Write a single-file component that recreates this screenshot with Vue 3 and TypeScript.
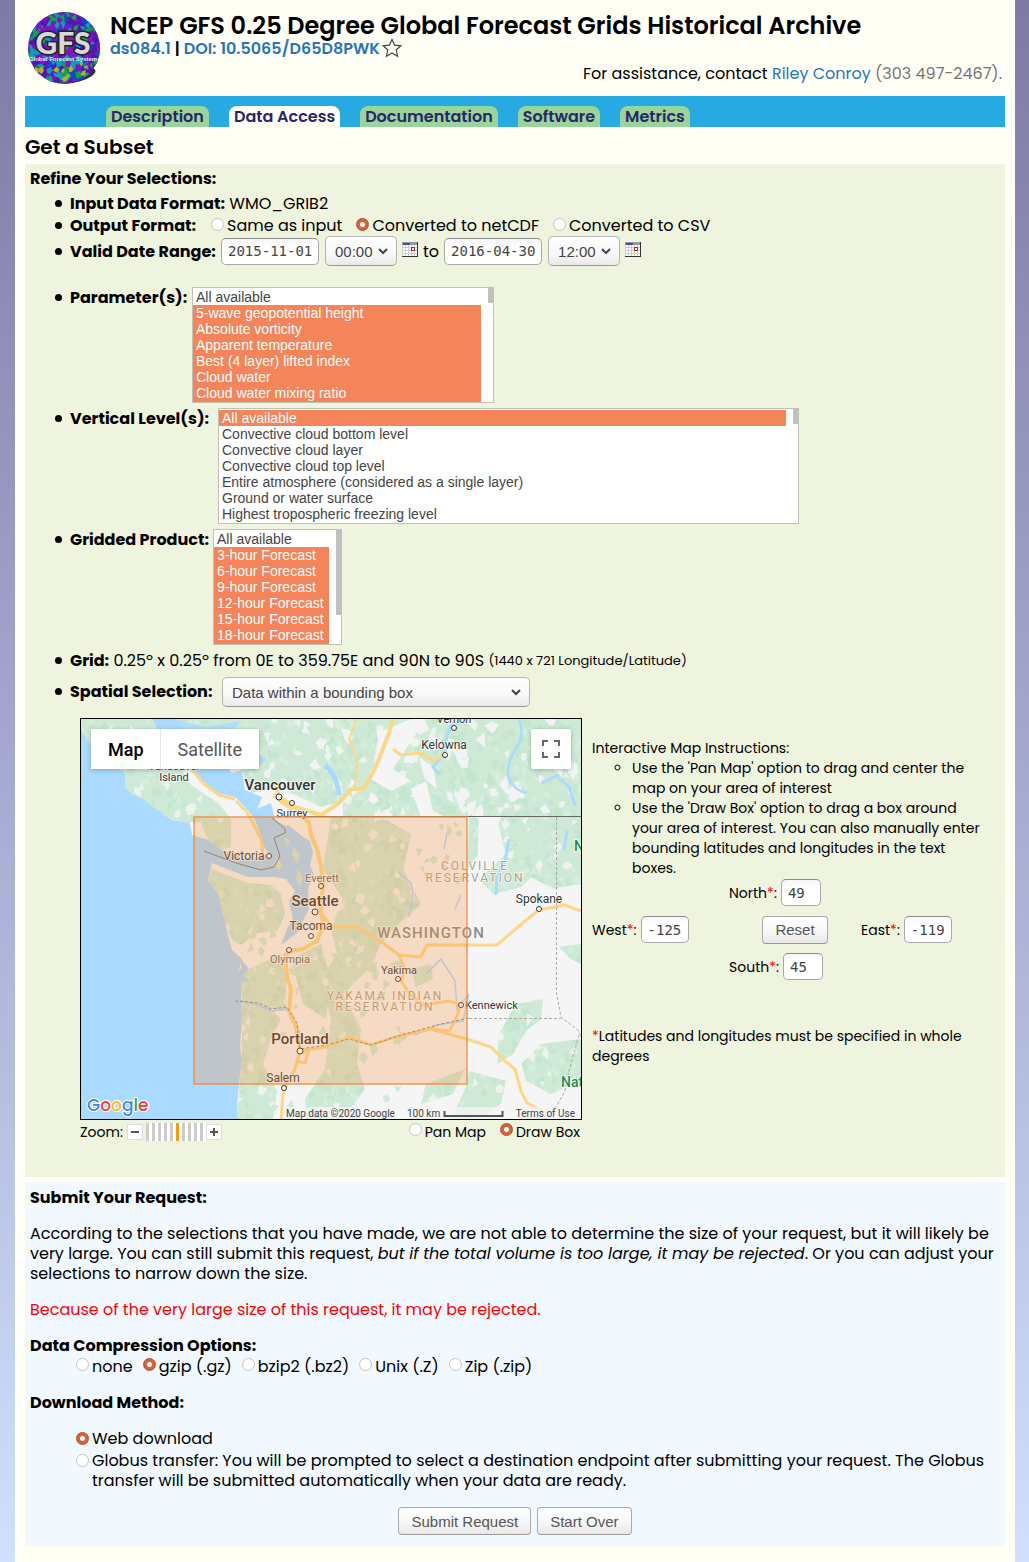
<script setup lang="ts">
import { ref } from 'vue'

interface Choice { value: string; label: string }
interface Place { name: string; x: number; y: number; cls: string; cx?: number; cy?: number; anchor?: 'start' | 'middle' }

const tabs = ['Description', 'Data Access', 'Documentation', 'Software', 'Metrics']
const activeTab = 'Data Access'

const outputFormats: Choice[] = [
  { value: 'same', label: 'Same as input' },
  { value: 'netcdf', label: 'Converted to netCDF' },
  { value: 'csv', label: 'Converted to CSV' },
]
const outputFormat = ref('netcdf')

const startDate = ref('2015-11-01')
const endDate = ref('2016-04-30')
const startHour = ref('00:00')
const endHour = ref('12:00')
const hours = ['00:00', '06:00', '12:00', '18:00']

const parameters = [
  'All available', '5-wave geopotential height', 'Absolute vorticity', 'Apparent temperature',
  'Best (4 layer) lifted index', 'Cloud water', 'Cloud water mixing ratio', 'Convective available potential energy',
  'Convective inhibition', 'Dewpoint temperature', 'Geopotential height', 'Haines index',
]
const levels = [
  'All available', 'Convective cloud bottom level', 'Convective cloud layer', 'Convective cloud top level',
  'Entire atmosphere (considered as a single layer)', 'Ground or water surface', 'Highest tropospheric freezing level',
  'Isobaric surface', 'Maximum wind level', 'Mean sea level', 'Tropopause',
]
const products = [
  'All available', '3-hour Forecast', '6-hour Forecast', '9-hour Forecast', '12-hour Forecast',
  '15-hour Forecast', '18-hour Forecast', '21-hour Forecast', '24-hour Forecast',
]
const chosenParameters = ref<string[]>(parameters.slice(1))
const chosenLevels = ref<string[]>(['All available'])
const chosenProducts = ref<string[]>(products.slice(1))

const spatial = ref('Data within a bounding box')
const spatialChoices = ['Data within a bounding box', 'Single gridpoint', 'Full grid']

const mapMode = ref('draw')
const zoom = ref(5)
const north = ref('49')
const south = ref('45')
const west = ref('-125')
const east = ref('-119')
function resetBox(): void {
  north.value = '49'
  south.value = '45'
  west.value = '-125'
  east.value = '-119'
}

const compressions: Choice[] = [
  { value: 'none', label: 'none' },
  { value: 'gz', label: 'gzip (.gz)' },
  { value: 'bz2', label: 'bzip2 (.bz2)' },
  { value: 'z', label: 'Unix (.Z)' },
  { value: 'zip', label: 'Zip (.zip)' },
]
const compression = ref('gz')
const download = ref('web')

const places: Place[] = [
  { name: 'Vernon', x: 373, y: 4, cls: 'town', cx: 373, cy: 9 },
  { name: 'Kelowna', x: 363, y: 30, cls: 'city', cx: 364, cy: 36 },
  { name: 'Vancouver', x: 199, y: 71, cls: 'metro', cx: 198, cy: 78 },
  { name: 'Surrey', x: 211, y: 98, cls: 'town', cx: 211, cy: 84 },
  { name: 'Vancouver', x: 93, y: 51, cls: 'town' },
  { name: 'Island', x: 93, y: 62, cls: 'town' },
  { name: 'Victoria', x: 163, y: 141, cls: 'city', cx: 188, cy: 137 },
  { name: 'Everett', x: 241, y: 163, cls: 'town dim', cx: 240, cy: 167 },
  { name: 'Seattle', x: 234, y: 187, cls: 'metro', cx: 234, cy: 193 },
  { name: 'Tacoma', x: 230, y: 211, cls: 'city', cx: 230, cy: 217 },
  { name: 'Olympia', x: 209, y: 244, cls: 'town dim', cx: 208, cy: 231 },
  { name: 'Spokane', x: 458, y: 184, cls: 'city', cx: 458, cy: 190 },
  { name: 'Yakima', x: 318, y: 255, cls: 'town', cx: 317, cy: 260 },
  { name: 'Kennewick', x: 384, y: 290, cls: 'town', cx: 380, cy: 286, anchor: 'start' },
  { name: 'Portland', x: 219, y: 325, cls: 'metro', cx: 219, cy: 332 },
  { name: 'Salem', x: 202, y: 363, cls: 'city', cx: 203, cy: 369 },
  { name: 'COLVILLE', x: 394, y: 151, cls: 'tribal' },
  { name: 'RESERVATION', x: 394, y: 163, cls: 'tribal' },
  { name: 'YAKAMA INDIAN', x: 304, y: 281, cls: 'tribal' },
  { name: 'RESERVATION', x: 304, y: 292, cls: 'tribal' },
  { name: 'WASHINGTON', x: 350, y: 219, cls: 'state' },
  { name: 'National', x: 480, y: 368, cls: 'forest', anchor: 'start' },
  { name: 'National', x: 493, y: 132, cls: 'forest', anchor: 'start' },
]

// Repeatable pseudo-random facets used as hill shading.
function facets(seed: number, x0: number, y0: number, w: number, h: number, count: number, size: number): string {
  let s = seed
  const rnd = (): number => {
    s = (s * 16807) % 2147483647
    return s / 2147483647
  }
  let d = ''
  for (let i = 0; i < count; i++) {
    const cx = x0 + rnd() * w
    const cy = y0 + rnd() * h
    const tilt = rnd() * 6.28
    const n = 3 + Math.floor(rnd() * 3)
    for (let k = 0; k < n; k++) {
      const a = tilt + (k * 6.28) / n
      const r = size * (0.35 + rnd() * 0.9)
      d += `${k ? 'L' : 'M'}${(cx + Math.cos(a) * r).toFixed(1)} ${(cy + Math.sin(a) * r * 1.2).toFixed(1)}`
    }
    d += 'Z'
  }
  return d
}
const shadeDark = facets(77, 0, 0, 500, 400, 1100, 5)
const shadeLight = facets(4211, 0, 0, 500, 400, 800, 4)
const clearings = facets(913, 0, 0, 500, 400, 330, 5)
const woods = facets(5557, 165, 210, 160, 180, 60, 5)
const snow = facets(8123, 215, 0, 285, 98, 45, 7)
const groves = facets(2719, 320, 105, 66, 60, 16, 4)
const logoBlobs = [
  { fill: '#1746c8', d: facets(31, 0, 0, 74, 74, 70, 5) },
  { fill: '#0aa0b4', d: facets(67, 0, 0, 74, 74, 90, 4) },
  { fill: '#13a04a', d: facets(105, 0, 0, 74, 74, 50, 4) },
  { fill: '#8a10c0', d: facets(209, 0, 0, 74, 74, 70, 4) },
  { fill: '#b4b414', d: facets(347, 10, 48, 54, 22, 14, 3) },
]
</script>

<template>
  <div class="page">
    <header class="head">
      <svg class="logo" width="74" height="74" viewBox="0 0 74 74" aria-label="Global Forecast System">
        <defs>
          <clipPath id="globe"><circle cx="37" cy="36" r="36" /></clipPath>
        </defs>
        <ellipse cx="50" cy="63" rx="19" ry="7" fill="#333" transform="rotate(-14 50 63)" />
        <g clip-path="url(#globe)">
          <rect width="74" height="74" fill="#5a12b4" />
          <path v-for="b in logoBlobs" :key="b.fill" :d="b.d" :fill="b.fill" />
        </g>
        <text x="36" y="42" text-anchor="middle" class="logo-gfs">GFS</text>
        <text x="36" y="49" text-anchor="middle" class="logo-sub">Global Forecast System</text>
      </svg>
      <div class="head-text">
        <h1>NCEP GFS 0.25 Degree Global Forecast Grids Historical Archive</h1>
        <div class="ids">
          <a href="#ds">ds084.1</a> <span>|</span> <a href="#doi">DOI: 10.5065/D65D8PWK</a>
          <svg width="20" height="20" viewBox="0 0 20 20"><path d="M10 1.500L12.600 7.200L18.800 7.800L14.200 12L15.600 18.200L10 15L4.400 18.200L5.800 12L1.200 7.800L7.400 7.200Z" fill="none" stroke="#444" stroke-width="1.200" /></svg>
        </div>
        <p class="assist">For assistance, contact <a href="#contact">Riley Conroy</a> <span>(303 497-2467).</span></p>
      </div>
    </header>

    <nav class="tabs">
      <a v-for="t in tabs" :key="t" href="#tab" :class="{ active: t === activeTab }">{{ t }}</a>
    </nav>

    <h2>Get a Subset</h2>

    <section class="panel refine">
      <h3>Refine Your Selections:</h3>
      <ul class="fields">
        <li class="plain"><b class="w-input">Input Data Format:</b> WMO_GRIB2</li>
        <li>
          <b class="w-output">Output Format:</b>
          <label v-for="f in outputFormats" :key="f.value" class="radio out">
            <input v-model="outputFormat" type="radio" name="format" :value="f.value" />{{ f.label }}
          </label>
        </li>
        <li class="dates">
          <b class="w-date">Valid Date Range:</b>
          <input v-model="startDate" class="box date" type="text" aria-label="Start date" />
          <span class="drop hour">
            <select v-model="startHour" aria-label="Start hour"><option v-for="h in hours" :key="h">{{ h }}</option></select>
            <svg width="12" height="8" viewBox="0 0 12 8"><path d="M2 2L6 6L10 2" /></svg>
          </span>
          <button class="cal" type="button" aria-label="Pick start date">
            <svg width="16" height="15" viewBox="0 0 16 15"><path d="M0 0H15V14H0Z" fill="#fff" /><path d="M0 0H16V3H0Z" fill="#999" /><path d="M1 1H8V3H1Z" fill="#4848b8" /><path d="M0 5.500H15M0 8.500H15M0 11.500H15M3.500 3V14M6.500 3V14M9.500 3V14M12.500 3V14M.5 3V14" stroke="#ccc" /><path d="M9.500 5.500H12.500V8.500H9.500Z" fill="#fff" stroke="#a02020" /><path d="M15.500 0V15M0 14.500H16" stroke="#333" /></svg>
          </button>
          <span class="to">to</span>
          <input v-model="endDate" class="box date" type="text" aria-label="End date" />
          <span class="drop hour">
            <select v-model="endHour" aria-label="End hour"><option v-for="h in hours" :key="h">{{ h }}</option></select>
            <svg width="12" height="8" viewBox="0 0 12 8"><path d="M2 2L6 6L10 2" /></svg>
          </span>
          <button class="cal" type="button" aria-label="Pick end date">
            <svg width="16" height="15" viewBox="0 0 16 15"><path d="M0 0H15V14H0Z" fill="#fff" /><path d="M0 0H16V3H0Z" fill="#999" /><path d="M1 1H8V3H1Z" fill="#4848b8" /><path d="M0 5.500H15M0 8.500H15M0 11.500H15M3.500 3V14M6.500 3V14M9.500 3V14M12.500 3V14M.5 3V14" stroke="#ccc" /><path d="M9.500 5.500H12.500V8.500H9.500Z" fill="#fff" stroke="#a02020" /><path d="M15.500 0V15M0 14.500H16" stroke="#333" /></svg>
          </button>
        </li>
        <li class="listrow">
          <label for="params" class="w-param">Parameter(s):</label>
          <span class="list">
            <select id="params" v-model="chosenParameters" class="w-plist" multiple size="7"><option v-for="p in parameters" :key="p">{{ p }}</option></select>
            <i class="thumb short"></i>
          </span>
        </li>
        <li class="listrow">
          <label for="levels" class="w-level">Vertical Level(s):</label>
          <span class="list">
            <select id="levels" v-model="chosenLevels" class="w-llist" multiple size="7"><option v-for="l in levels" :key="l">{{ l }}</option></select>
            <i class="thumb short"></i>
          </span>
        </li>
        <li class="listrow">
          <label for="products" class="w-prod">Gridded Product:</label>
          <span class="list">
            <select id="products" v-model="chosenProducts" class="w-glist" multiple size="7"><option v-for="g in products" :key="g">{{ g }}</option></select>
            <i class="thumb long"></i>
          </span>
        </li>
        <li class="plain gridrow"><b>Grid:</b> 0.25º x 0.25º from 0E to 359.75E and 90N to 90S <small>(1440 x 721 Longitude/Latitude)</small></li>
        <li class="spatial">
          <label for="spatial" class="w-spat">Spatial Selection:</label>
          <span class="drop wide">
            <select id="spatial" v-model="spatial"><option v-for="s in spatialChoices" :key="s">{{ s }}</option></select>
            <svg width="12" height="8" viewBox="0 0 12 8"><path d="M2 2L6 6L10 2" /></svg>
          </span>
        </li>
      </ul>

      <div class="map-area">
        <div class="map-col">
          <div class="map">
            <svg width="500" height="400" viewBox="0 0 500 400">
              <defs>
                <clipPath id="green">
                  <path d="M0 11L9 24L24 38L44 54L44 68L52 76L61 79L75 90L91 101L109 104L120 103L127 121L141 131L150 128L150 100L137 84L110 66L94 40L71 0H0Z" />
                  <path d="M94 0L107 11L140 40L161 51L170 74L190 70L215 76L240 88L262 82L262 98H500V0Z" />
                  <path d="M131 150L141 154L167 164L190 166L200 175L204 195L196 212L176 214L160 226L152 222L144 204L137 174L127 161Z" />
                  <path d="M161 252L185 245L196 262L184 285L200 300L190 320L182 345L196 372L192 400H157L156 388L161 341Z" />
                  <path d="M250 98L300 98L330 115L322 150L340 185L318 205L300 225L288 250L262 275L280 310L276 345L284 370L262 400H225L224 380L244 350L250 300L240 260L256 235L250 210L262 180L242 150Z" />
                  <path d="M164 252L200 235L205 260L205 290L185 290L170 280Z" />
                  <path d="M210 240L240 225L250 260L245 300L222 285Z" />
                  <path d="M388 98L408 98L402 130L386 150ZM415 98H500V165L472 170L450 158L440 168L412 175L398 160L425 135Z" />
                  <path d="M435 285L462 280L460 300L445 312L432 335L416 345L418 315ZM440 345L460 325L500 320V362L470 375L445 362ZM388 352L425 362L420 385L398 400H370L384 370ZM478 228L500 225V245L490 240ZM345 365L384 350L372 375L340 385ZM330 250L350 245L352 260L335 268Z" />
                </clipPath>
              </defs>
              <rect width="500" height="400" fill="#aadaff" />
              <g fill="#f5f5f5">
                <path d="M0 11L9 24L24 38L44 54L44 68L52 76L61 79L75 90L91 101L109 104L111 116L127 121L141 131L161 138L176 140L187 134L181 124L179 114L174 101L164 88L154 78L137 74L121 61L107 48L77 11L71 0H0Z" />
                <path d="M94 0L107 11L140 40L151 54L161 51L164 71L181 78L176 90L190 84L194 101L207 108L218 118L224 132L227 145L231 158L224 172L228 190L220 204L212 200L208 182L214 172L205 160L194 158L167 158L141 148L131 144L127 161L137 174L141 190L144 204L148 220L151 231L161 240L158 251L166 248L161 262L160 280L161 298L159 328L161 341L158 364L156 388L157 400H500V0Z" />
              </g>
              <g clip-path="url(#green)">
                <rect width="500" height="400" fill="#ceead6" />
                <path :d="shadeDark" fill="#bfe3c8" opacity=".6" />
                <path :d="shadeLight" fill="#dcf1e1" opacity=".6" />
                <path :d="clearings" fill="#f5f5f5" opacity=".85" />
                <path :d="snow" fill="#f1f3f4" />
              </g>
              <g fill="#f5f5f5">
                <path d="M296 14L330 0H345L325 30L312 50L330 62L310 72L290 60L300 40ZM330 70L345 62L352 92L365 98H340ZM338 38L352 48L356 70L344 60Z" />
                <path d="M398 98L420 98L408 135L396 150Z" />
              </g>
              <path :d="woods" fill="#ceead6" />
              <path :d="groves" fill="#ceead6" />
              <g fill="#aadaff">
                <path d="M207 106L222 118L229 122L232 134L229 146L233 156L227 170L228 188L222 202L216 214L208 220L200 226L206 210L214 196L218 178L212 165L205 158L196 150L186 146L190 134L200 126L196 112Z" />
                <path d="M160 240L168 250L162 256L170 264L160 262Z" />
                <path d="M94 0L125 8L160 2L150 14L170 30L186 40L180 46L165 36L172 52L158 46L140 30L120 20Z" opacity=".8" />
              </g>
              <g fill="#ceead6"><path d="M196 138L201 146L198 152L193 145ZM213 128L219 136L216 144L211 136ZM203 118L209 122L205 127ZM217 150L222 158L219 168L215 160Z" /></g>
              <g fill="none" stroke="#aadaff" stroke-width="3">
                <path d="M372 4Q364 14 364 34L352 48L358 55" />
                <path d="M438 0Q444 16 436 28Q424 46 428 60Q434 72 446 74" stroke-width="2.500" />
                <path d="M480 60L488 68L494 86M460 64L478 56" />
                <path d="M244 46Q256 56 258 76" stroke-width="5" />
                <path d="M428 120L424 142L416 156L415 176M486 112L483 132" />
                <path d="M366 114L363 130M380 176L374 190M316 152L330 164L332 176L328 198M345 255L360 240L374 262L376 290L388 275L382 302L356 306L334 316" stroke-width="1.500" />
                <path d="M160 282L178 286L190 292L206 290L214 304L216 325" stroke-width="2" />
              </g>
              <g fill="none" stroke="#fbd786" stroke-width="3" stroke-linejoin="round">
                <path d="M110 50L122 64L138 76L154 80M155 82L165 92L172 104L180 120L182 134" />
                <path d="M193 76L202 84L216 92L228 104L230 116L236 130L240 148L242 166L240 190L242 206L236 222L222 230L210 232L204 236L206 258L210 270L208 292L217 312L219 332" stroke-width="4" />
                <path d="M194 62L198 78L214 88L240 96L258 84L270 70L282 70L292 54L298 40L308 14L312 0" stroke-width="4" />
                <path d="M276 0L268 20L276 40L274 68" stroke-width="2" />
                <path d="M312 30L320 36L340 34L352 42L364 36" />
                <path d="M238 193L252 208L276 208L302 224L318 236L340 238L346 226L400 226L416 226L444 202L458 191L484 186L500 192" stroke-width="3" />
                <path d="M318 236L324 252L320 262L328 274L342 286L368 282L380 286L374 302L368 312L350 310L314 318L290 326L268 318L246 328L232 330L219 332" stroke-width="3" />
                <path d="M350 310L392 322L410 328L424 342L434 350L440 372L446 384L466 394M219 332L214 350L206 364L202 376L200 400M228 330L224 344L216 342" stroke-width="3" />
              </g>
              <path d="M195 97.500H500" stroke="#666" />
              <path d="M190 98L204 110L204 114L193 119L199 137L193 148L180 151L155 144L123 132" fill="none" stroke="#7a7a7a" />
              <path d="M475.500 98V274L480 298L498 312L500 318M388 299.500H480M498 316L488 352L484 372L474 390" fill="none" stroke="#a9a9a9" stroke-dasharray="3 2" />
              <path d="M154 282L178 284L190 290L206 288L216 304L219 330L246 326L268 320L290 326L314 318L356 306L388 299" fill="none" stroke="#888" stroke-dasharray="3 2" />

              <g class="labels">
                <g v-for="(p, i) in places" :key="i">
                  <circle v-if="p.cx" :cx="p.cx" :cy="p.cy" :r="p.cls === 'metro' ? 3 : 2.5" fill="#fff" stroke="#333" />
                  <text :x="p.x" :y="p.y" :class="p.cls" :text-anchor="p.anchor ?? 'middle'">{{ p.name }}</text>
                </g>
              </g>
              <rect x="113" y="98" width="273" height="267" fill="#f98f3a" fill-opacity=".26" stroke="#f08a3c" stroke-opacity=".65" stroke-width="2" />

              <rect x="202" y="388" width="298" height="12" fill="#f5f5f5" fill-opacity=".7" />
              <g class="credit">
                <text x="205" y="398">Map data ©2020 Google</text>
                <text x="326" y="398">100 km</text>
                <text x="494" y="398" text-anchor="end">Terms of Use</text>
              </g>
              <path d="M363.500 392V397H421.500V392" fill="none" stroke="#555" stroke-width="2" />
              <text x="6" y="392" class="google"><tspan fill="#4285f4">G</tspan><tspan fill="#ea4335">o</tspan><tspan fill="#fbbc05">o</tspan><tspan fill="#4285f4">g</tspan><tspan fill="#34a853">l</tspan><tspan fill="#ea4335">e</tspan></text>
            </svg>
            <div class="map-type"><button type="button" class="on">Map</button><button type="button">Satellite</button></div>
            <button type="button" class="full" aria-label="Toggle fullscreen view">
              <svg width="18" height="18" viewBox="0 0 18 18"><path d="M1 6V1H6M12 1H17V6M17 12V17H12M6 17H1V12" fill="none" stroke="#666" stroke-width="2" /></svg>
            </button>
          </div>
          <div class="map-tools">
            <label for="zoom">Zoom:</label>
            <button type="button" class="step" aria-label="Zoom out" @click="zoom--"><svg width="8" height="8" viewBox="0 0 8 8"><path d="M0 4H8" stroke="#555" stroke-width="2" /></svg></button>
            <input id="zoom" v-model.number="zoom" class="zoom" type="range" min="0" max="9" />
            <button type="button" class="step" aria-label="Zoom in" @click="zoom++"><svg width="8" height="8" viewBox="0 0 8 8"><path d="M0 4H8M4 0V8" stroke="#555" stroke-width="2" /></svg></button>
            <span class="modes">
              <label class="radio"><input v-model="mapMode" type="radio" name="mode" value="pan" />Pan Map</label>
              <label class="radio"><input v-model="mapMode" type="radio" name="mode" value="draw" />Draw Box</label>
            </span>
          </div>
        </div>

        <div class="guide">
          <p>Interactive Map Instructions:</p>
          <ul>
            <li>Use the 'Pan Map' option to drag and center the map on your area of interest</li>
            <li>Use the 'Draw Box' option to drag a box around your area of interest. You can also manually enter bounding latitudes and longitudes in the text boxes.</li>
          </ul>
          <div class="bounds">
            <label class="mid">North<em>*</em>:<input v-model="north" class="box small" type="text" /></label>
            <label>West<em>*</em>:<input v-model="west" class="box" type="text" /></label>
            <button type="button" class="btn" @click="resetBox">Reset</button>
            <label>East<em>*</em>:<input v-model="east" class="box" type="text" /></label>
            <label class="mid">South<em>*</em>:<input v-model="south" class="box small" type="text" /></label>
          </div>
          <p class="note"><em>*</em>Latitudes and longitudes must be specified in whole degrees</p>
        </div>
      </div>
    </section>

    <section class="panel submit">
      <h3>Submit Your Request:</h3>
      <p>According to the selections that you have made, we are not able to determine the size of your request, but it will likely be very large. You can still submit this request, <i>but if the total volume is too large, it may be rejected</i>. Or you can adjust your selections to narrow down the size.</p>
      <p class="warn">Because of the very large size of this request, it may be rejected.</p>
      <h3 class="comp-title">Data Compression Options:</h3>
      <div class="comp">
        <label v-for="c in compressions" :key="c.value" class="radio"><input v-model="compression" type="radio" name="comp" :value="c.value" />{{ c.label }}</label>
      </div>
      <h3 class="dl-title">Download Method:</h3>
      <div class="dl">
        <label class="radio"><input v-model="download" type="radio" name="dl" value="web" />Web download</label>
        <label class="radio"><input v-model="download" type="radio" name="dl" value="globus" /><span>Globus transfer: You will be prompted to select a destination endpoint after submitting your request. The Globus transfer will be submitted automatically when your data are ready.</span></label>
      </div>
      <div class="actions"><button type="button" class="btn">Submit Request</button><button type="button" class="btn">Start Over</button></div>
    </section>
  </div>
</template>

<style>
html {
  background: linear-gradient(#7f7aa2, #a3a5cb 45%, #b6bfe0 70%, #d1e0ff);
}
</style>

<style scoped>
.page {
  margin: 0 14px 0 15px;
  padding: 0 10px 16px;
  background: #fffff5;
  color: #000;
  font: 16px/20px Poppins, Inter, "Open Sans", sans-serif;
}
*, *::before { box-sizing: border-box; }
h1, h2, h3, p, ul { margin: 0; padding: 0; }
a { color: #2a74b8; text-decoration: none; }
em { color: #f00; font-style: normal; }

.head { display: flex; gap: 9px; height: 96px; padding: 12px 3px 0 2px; }
.logo { flex: none; }
.logo-gfs { font: 900 30px Lato, sans-serif; fill: #d8d8d8; stroke: #222; stroke-width: 3px; paint-order: stroke; }
.logo-sub { font: 700 6px "Liberation Sans", sans-serif; fill: #e8e8ff; }
.head-text { flex: 1; }
h1 { font-size: 24px; line-height: 27px; font-weight: 600; }
.ids { display: flex; gap: 4px; align-items: center; line-height: 20px; font-weight: 600; }
.ids svg { margin: -3px -2px -1px; }
.assist { margin-top: 5px; text-align: right; }
.assist span { color: #777; }

.tabs { display: flex; gap: 20px; padding: 10px 81px 0; background: #27aae1; }
.tabs a { padding: 0 5px; line-height: 21px; border-radius: 8px 8px 0 0; background: #98d49b; color: #2b2466; font-weight: 600; }
.tabs a.active { background: #fffff5; }
h2 { font-size: 20px; line-height: 37px; padding-top: 2px; margin-bottom: -2px; font-weight: 600; }
h3 { font-size: 16px; font-weight: 700; }

.panel { padding: 5px; }
.refine { background: #eff4de; padding-bottom: 34px; }
.fields { list-style: none; padding-left: 25px; margin-top: 4px; }
.fields > li { display: flex; align-items: center; min-height: 22px; white-space: pre; gap: 4px; }
.fields > li::before { content: ""; flex: none; width: 7px; height: 7px; margin: 0 4px 2px 0; border-radius: 50%; background: #000; }
.fields > li > label:not(.radio) { font-weight: 700; }
.fields > .plain { gap: 0; }
.fields > .plain::before { margin-right: 8px; }
.fields > .listrow { align-items: flex-start; margin-bottom: 5px; }
.fields > .listrow::before { margin-top: 7px; }
.listrow > label { padding-top: 1px; }
.fields > .dates { margin: -1px 0 21px; height: 30px; gap: 5px; }
.fields > .dates::before { margin: 0 3px 0 0; }
.dates > b, .to { padding-top: 2px; }
.fields > .gridrow { margin-bottom: 5px; }
small { font-size: 13px; }
.w-input { width: 155px; }
.w-output { width: 137px; }
.w-date { width: 146px; }
.w-param { width: 118px; }
.w-level { width: 144px; }
.w-prod { width: 139px; }
.w-spat { width: 148px; }

.radio { display: flex; align-items: flex-start; gap: 3px; }
.out { margin-right: 10px; }
input[type="radio"] {
  appearance: none; flex: none; width: 13px; height: 13px; margin: 2px 0 0;
  border: 1px solid #c4c4c4; border-radius: 50%; background: #fff;
}
input[type="radio"]:checked {
  border-color: #a9502c; background: radial-gradient(circle, #fff 2px, #d9623a 3px);
}
.box {
  height: 27px; width: 48px; padding: 0 6px; border: 1px solid #a8a8a8; border-top-color: #8c8c8c; border-radius: 5px;
  background: linear-gradient(#f6f6f6, #fff 8px); color: #444; font: 14px "DejaVu Sans Mono", monospace;
}
.box.date { width: 98px; }
.box.small { width: 40px; }
.drop { display: grid; align-items: center; height: 30px; }
.drop select, .drop svg { grid-area: 1 / 1; }
.drop select {
  appearance: none; height: 30px; width: 100%; padding: 0 9px; border: 1px solid #b4b4b4; border-bottom-color: #999; border-radius: 5px;
  background: linear-gradient(#fff, #f8f8f8 60%, #ebe9e8); color: #444; font: 15px "Liberation Sans", Arial, sans-serif;
}
.drop svg { justify-self: end; margin-right: 8px; pointer-events: none; fill: none; stroke: #444; stroke-width: 2; }
.hour { width: 72px; margin-left: 1px; }
.wide { width: 308px; }
.cal { padding: 0; border: 0; background: none; line-height: 0; height: 18px; display: flex; align-items: flex-start; }

.list { position: relative; }
.list select {
  appearance: none; display: block; height: 116px; padding: 1px 12px 1px 0; border: 1px solid #c2c2b4; border-radius: 0;
  background: #fff; color: #444; font: 14px/16px "Liberation Sans", Arial, sans-serif; overflow: hidden; outline: 0;
}
.list option { height: 16px; min-height: 16px; padding: 0 3px; line-height: 16px; }
.list option:checked { background: linear-gradient(#f4845a, #f4845a); -webkit-text-fill-color: #fff; }
.w-plist { width: 302px; }
.w-llist { width: 581px; }
.w-glist { width: 129px; }
.thumb { position: absolute; top: 1px; right: 0; width: 6px; background: #c0c0c0; }
.short { height: 15px; }
.long { height: 85px; }
.spatial { height: 30px; }

.map-area { display: flex; gap: 10px; margin: 11px 0 0 50px; font-size: 14px; }
.map-col { flex: none; }
.map { position: relative; width: 502px; height: 402px; border: 1px solid #000; }
.map > svg { display: block; }
.map-type { position: absolute; top: 10px; left: 10px; display: flex; box-shadow: 0 1px 4px #0004; border-radius: 2px; }
.map-type button { height: 40px; padding: 0 17px; border: 0; background: #fff; color: #565656; font: 18px Roboto, sans-serif; }
.map-type .on { color: #000; font-weight: 500; border-right: 1px solid #e6e6e6; padding-right: 16px; }
.full { position: absolute; top: 10px; right: 10px; width: 40px; height: 40px; padding: 0; border: 0; border-radius: 2px; background: #fff; box-shadow: 0 1px 4px #0004; display: grid; place-items: center; }
.labels text { font-family: Roboto, sans-serif; fill: #333; stroke: #ffffffb0; stroke-width: 2px; paint-order: stroke; }
.labels .metro { font-size: 15px; font-weight: 500; }
.labels .city { font-size: 12px; }
.labels .town { font-size: 11px; }
.labels .dim { fill: #666; }
.labels .tribal { font-size: 12px; fill: #a8a48c; letter-spacing: 2px; }
.labels .state { font-size: 15px; font-weight: 500; fill: #8a8a8a; letter-spacing: 1px; }
.labels .forest { font-size: 14px; font-weight: 500; fill: #1e8e4e; }
.credit { font: 10px Roboto, sans-serif; fill: #444; }
.google { font: 500 17px Poppins, Lato, sans-serif; stroke: #fff; stroke-width: 2px; paint-order: stroke; }

.map-tools { display: flex; align-items: center; height: 23px; }
.map-tools > label { width: 47px; }
.step { width: 16px; height: 16px; padding: 0; border: 1px solid #ddd; background: #fff; display: grid; place-items: center; }
.zoom {
  appearance: none; width: 60px; height: 18px; margin: 0 0 0 3px; padding-right: 3px;
  background: repeating-linear-gradient(90deg, #ccc 0 3px, #fff 3px 6px);
}
.zoom::-webkit-slider-thumb { appearance: none; width: 3px; height: 18px; background: #ff9a00; }
.modes { display: flex; gap: 14px; margin-left: auto; padding-right: 2px; }
.modes input[type="radio"] { margin-top: 1px; }

.guide { flex: 1; padding: 20px 16px 0 0; }
.guide ul { padding-left: 40px; list-style: circle; }
.bounds { display: grid; grid-template-columns: 137px 132px auto; grid-auto-rows: 27px; row-gap: 10px; margin-top: 1px; align-items: center; }
.bounds label { display: flex; align-items: center; }
.bounds .box { margin-left: 4px; }
.bounds .mid { grid-column: 2 / 4; }
.bounds .btn { justify-self: center; }
.note { margin-top: 46px; }

.btn {
  height: 28px; padding: 0 12px; border: 1px solid #aaa; border-bottom-color: #999; border-radius: 4px;
  background: linear-gradient(#fff, #f6f6f6 60%, #e9e7e6); color: #555; font: 15px "Liberation Sans", Arial, sans-serif;
}
.submit { margin-top: 5px; padding: 6px 5px 11px; background: #f1f9ff; }
.submit p, .comp-title, .dl-title, .dl { margin-top: 16px; }
.submit .warn { color: #f00; }
.comp { display: flex; gap: 10px; margin-top: 1px; padding-left: 46px; }
.comp input[type="radio"] { margin-top: 1px; }
.dl { display: grid; gap: 2px; padding-left: 46px; }
.dl input[type="radio"] { margin-top: 3px; }
.actions { display: flex; justify-content: center; gap: 6px; margin-top: 16px; }
</style>
